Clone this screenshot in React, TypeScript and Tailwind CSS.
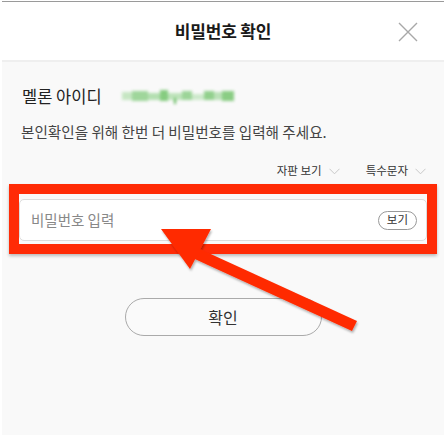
import React from "react";

const font = { fontFamily: '"Noto Sans CJK KR", "Noto Sans", sans-serif' };

const Chevron = () => (
  <svg width="11" height="7" viewBox="0 0 11 7" className="ml-[7px]">
    <path d="M0.5 0.8 L5.5 5.8 L10.5 0.8" fill="none" stroke="#c8c8c8" strokeWidth="1" />
  </svg>
);

const BlurredId = () => {
  const blocks = [
    [0, 3, 10, 8, "#c6e6c3"],
    [10, 2, 16, 10, "#9fd69b"],
    [26, 4, 12, 7, "#b4dfb1"],
    [38, 1, 8, 11, "#86cc80"],
    [46, 4, 14, 7, "#bde3ba"],
    [60, 2, 10, 9, "#9cd498"],
    [70, 5, 12, 6, "#cde9cb"],
    [82, 2, 10, 9, "#92d08d"],
    [92, 3, 8, 8, "#bbe1b8"],
    [100, 2, 12, 10, "#8acd84"],
  ] as const;
  return (
    <div className="relative w-[112px] h-[14px] ml-[20px] blur-[1.6px]">
      {blocks.map(([x, y, w, h, c], i) => (
        <div
          key={i}
          className="absolute"
          style={{ left: x, top: y, width: w, height: h, background: c }}
        />
      ))}
      <div className="absolute left-[52px] top-[9px] w-[2px] h-[6px] bg-[#5fb85a]" />
    </div>
  );
};

const App = () => {
  return (
    <div className="w-[446px] h-[435px] bg-white pt-[1px] px-[2px] relative overflow-hidden" style={font}>
      <div className="h-full border-t border-[#9a9a9a] flex flex-col">
        {/* header */}
        <div className="h-[60px] bg-white relative flex items-center justify-center border-b-2 border-[#efefef]">
          <h1 className="text-[17px] font-bold text-[#1a1a1a] tracking-[-0.2px]">비밀번호 확인</h1>
          <svg
            width="20"
            height="20"
            viewBox="0 0 20 20"
            className="absolute right-[26px] top-[20px]"
          >
            <path d="M1 1 L19 19 M19 1 L1 19" stroke="#a8a8a8" strokeWidth="1.4" fill="none" />
          </svg>
        </div>

        {/* body */}
        <div className="flex-1 bg-[#f9f9f9] flex flex-col">
          <div className="flex items-center pl-[20px] mt-[22px] h-[24px]">
            <span className="text-[16.5px] text-[#222]">멜론 아이디</span>
            <BlurredId />
          </div>
          <p className="pl-[19px] mt-[14px] text-[14.6px] text-[#444] leading-[20px]">
            본인확인을 위해 한번 더 비밀번호를 입력해 주세요.
          </p>
          <div className="flex justify-end items-center mt-[21px] pr-[18px] text-[11.5px] text-[#333] h-[16px]">
            <span className="flex items-center">
              자판 보기
              <Chevron />
            </span>
            <span className="flex items-center ml-[26px]">
              특수문자
              <Chevron />
            </span>
          </div>

          {/* highlighted input */}
          <div className="mx-[7px] mt-[5px] border-[10px] border-[#ff2b06] pt-[5px] pb-[3px] shadow-[0_2px_3px_rgba(0,0,0,0.25)]">
            <div className="h-[42px] bg-white border border-[#dcdcdc] rounded-[5px] flex items-center pl-[11px] pr-[9px]">
              <span className="text-[14.5px] text-[#888] flex-1">비밀번호 입력</span>
              <span className="h-[19px] px-[8px] rounded-full border border-[#999] text-[11.5px] text-[#333] flex items-center leading-none">
                보기
              </span>
            </div>
          </div>

          <div className="flex justify-center mt-[44px]">
            <button className="w-[197px] h-[38px] rounded-full border border-[#aaa] bg-[#fafafa] text-[16px] text-[#333]">
              확인
            </button>
          </div>
        </div>
      </div>

      {/* annotation arrow */}
      <svg
        width="446"
        height="435"
        viewBox="0 0 446 435"
        className="absolute left-0 top-0 pointer-events-none"
      >
        <defs>
          <filter id="sh" x="-10%" y="-10%" width="130%" height="130%">
            <feDropShadow dx="1" dy="2" stdDeviation="1.2" floodColor="#000" floodOpacity="0.3" />
          </filter>
        </defs>
        <g filter="url(#sh)" fill="#ff2b06">
          <path d="M191 245 L357 321 L352 331 L186 255 Z" />
          <path d="M161 229 L211 229 L190 269 Z" />
        </g>
      </svg>
    </div>
  );
};

export default App;
